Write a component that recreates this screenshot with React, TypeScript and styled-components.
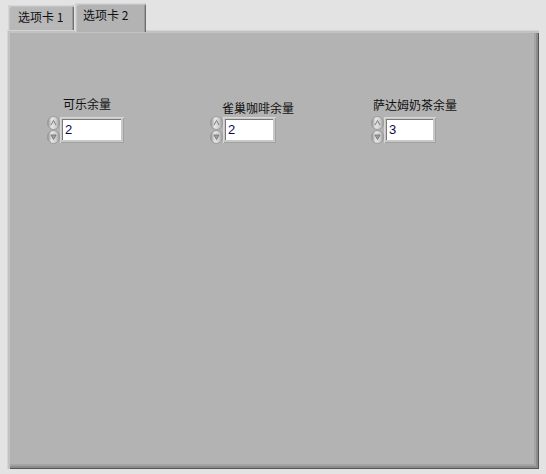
import styled, { createGlobalStyle } from "styled-components";

const GlobalCSS = createGlobalStyle`
  html, body {
    margin: 0;
    padding: 0;
    background: #e3e3e3;
    font-family: "Noto Sans CJK SC", "Noto Sans", sans-serif;
  }
`;

const Wrapper = styled.div`
  box-sizing: border-box;
  width: 546px;
  height: 474px;
  padding: 0 7px 5px 7px;
  display: flex;
  flex-direction: column;
`;

const TabBar = styled.div`
  display: flex;
  align-items: flex-end;
  height: 30px;
  padding-left: 1px;
  position: relative;
  z-index: 1;
`;

const Tab = styled.div<{ active?: boolean }>`
  box-sizing: border-box;
  height: ${({ active }) => (active ? "29px" : "25px")};
  width: ${({ active }) => (active ? "71px" : "66px")};
  margin-bottom: ${({ active }) => (active ? "-2px" : "0")};
  margin-left: ${({ active }) => (active ? "1px" : "0")};
  background: ${({ active }) => (active ? "#b3b3b3" : "#b8b8b8")};
  border-radius: 3px 3px 0 0;
  box-shadow: inset 1px 1px 0 #d6d6d6, inset 2px 2px 0 #c4c4c4,
    inset -1px 0 0 #6e6e6e, inset -2px 0 0 #9a9a9a;
  font-size: 12px;
  color: #111;
  display: flex;
  align-items: flex-start;
  padding: ${({ active }) => (active ? "5px 0 0 8px" : "5px 0 0 10px")};
  line-height: 14px;
`;

const Panel = styled.div`
  flex: 1;
  position: relative;
  background: #b3b3b3;
  box-shadow: inset 1px 1px 0 #d4d4d4, inset 3px 3px 0 #c2c2c2,
    inset -1px -1px 0 #555, inset -3px -3px 0 #8c8c8c, inset -5px -5px 0 #a4a4a4;
`;

const Control = styled.div<{ x: number; y: number }>`
  position: absolute;
  left: ${({ x }) => x}px;
  top: ${({ y }) => y}px;
  display: flex;
  align-items: center;
`;

const Label = styled.div<{ dx: number; dy: number }>`
  position: absolute;
  left: ${({ dx }) => dx}px;
  top: ${({ dy }) => dy}px;
  font-size: 12px;
  line-height: 14px;
  color: #111;
  white-space: nowrap;
`;

const Field = styled.div<{ w: number }>`
  box-sizing: border-box;
  width: ${({ w }) => w}px;
  height: 26px;
  background: #c8c8c8;
  padding: 2px 3px 3px 2px;
  box-shadow: inset 1px 1px 0 #d8d8d8, inset -1px -1px 0 #a0a0a0;
`;

const FieldInner = styled.div`
  height: 100%;
  background: #fff;
  box-shadow: inset 1px 1px 0 #7a7a7a;
  font-family: "Liberation Sans", Arial, sans-serif;
  font-size: 13px;
  line-height: 21px;
  color: #0a0a50;
  padding-left: 3px;
`;

const Spinner = () => (
  <svg width="13" height="28" viewBox="0 0 13 28">
    <defs>
      <linearGradient id="sg" x1="0" x2="1" y1="0" y2="0">
        <stop offset="0" stopColor="#8c8c8c" />
        <stop offset="0.35" stopColor="#e6e6e6" />
        <stop offset="0.7" stopColor="#cfcfcf" />
        <stop offset="1" stopColor="#9a9a9a" />
      </linearGradient>
    </defs>
    <rect x="0.5" y="0.5" width="12" height="13" rx="6" fill="url(#sg)" stroke="#9b9b9b" />
    <rect x="0.5" y="14.5" width="12" height="13" rx="6" fill="url(#sg)" stroke="#9b9b9b" />
    <path d="M4 9 L6.5 4.5 L9 9" fill="none" stroke="#7a7a7a" strokeWidth="1" />
    <path d="M4 19 L6.5 23.5 L9 19 Z" fill="#a0a0a0" stroke="#7a7a7a" strokeWidth="1" />
  </svg>
);

const controls = [
  { label: "可乐余量", value: "2", x: 40, y: 86, w: 64, dx: 16, dy: -19 },
  { label: "雀巢咖啡余量", value: "2", x: 203, y: 86, w: 53, dx: 12, dy: -15 },
  { label: "萨达姆奶茶余量", value: "3", x: 364, y: 86, w: 52, dx: 2, dy: -18 },
];

export default function App() {
  return (
    <>
      <GlobalCSS />
      <Wrapper>
        <TabBar>
          <Tab>选项卡 1</Tab>
          <Tab active>选项卡 2</Tab>
        </TabBar>
        <Panel>
          {controls.map((c) => (
            <Control key={c.label} x={c.x} y={c.y}>
              <Label dx={c.dx} dy={c.dy}>{c.label}</Label>
              <Spinner />
              <Field w={c.w}>
                <FieldInner>{c.value}</FieldInner>
              </Field>
            </Control>
          ))}
        </Panel>
      </Wrapper>
    </>
  );
}
